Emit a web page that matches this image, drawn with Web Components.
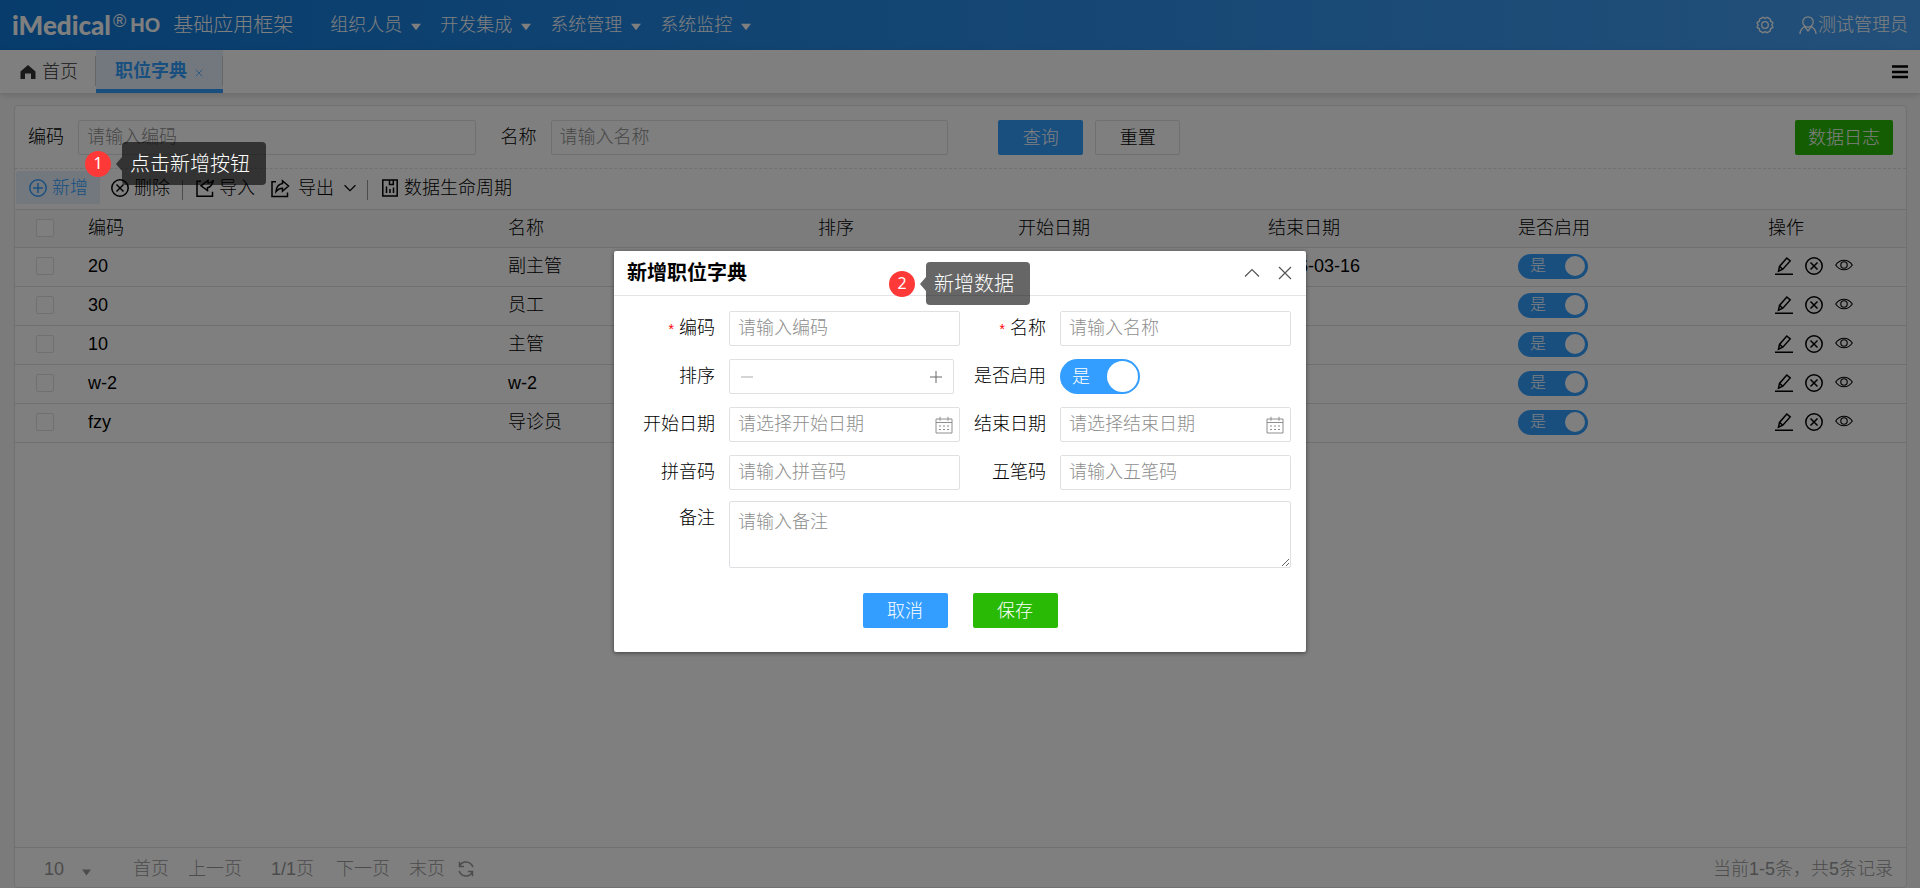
<!DOCTYPE html>
<html lang="zh-CN">
<head>
<meta charset="utf-8">
<title>职位字典</title>
<style>
  html, body { margin: 0; height: 100%; }
  body {
    font: 300 18px/24px "Liberation Sans", "Noto Sans CJK SC", sans-serif;
    color: #000;
    --blue: #339eff;
    --green: #28ba05;
    --line: #dfe0e4;
    --muted: #8e8e8e;
  }
</style>
</head>
<body>
<app-shell></app-shell>
<script>
const RESET = `
  *, *::before, *::after { box-sizing: border-box; }
  button, input, textarea, select { font: inherit; color: inherit; margin: 0; }
  button { background: none; border: 0; padding: 0; cursor: pointer; white-space: nowrap; }
  a { color: inherit; text-decoration: none; white-space: nowrap; }
  ::placeholder { color: var(--muted); opacity: 1; }
`;

function define(name, css, html) {
  customElements.define(name, class extends HTMLElement {
    constructor() {
      super();
      const template = document.createElement('template');
      const body = typeof html === 'function' ? html(this) : html;
      template.innerHTML = `<style>${RESET}${css}</style>${body}`;
      this.attachShadow({ mode: 'open' }).append(template.content.cloneNode(true));
    }
  });
}

const ICONS = {
  plus: '<circle cx="9" cy="9" r="8.2"/><path d="M9 4v10M4 9h10"/>',
  remove: '<circle cx="9" cy="9" r="8.2"/><path d="M5.5 5.500l7 7M12.500 5.500l-7 7"/>',
  import: '<path d="M5 2.200H1v15h15.500v-4.500"/><path d="M17.500 1.200C16 3 14.500 4 12 4V1.500L5 6.800l6.500 4.700V8.800c3-.8 5-3.600 6-7.600z"/>',
  export: '<path d="M5 2.700H1v14.800h15.500v-4"/><path d="M5 12.500c.5-5 3-7.500 6.500-8V1.800L17.500 7l-6 5.200V9.200c-2.500 0-4.800 1.200-6.500 3.300z"/>',
  chart: '<path d="M1.800 1h14.400v16H1.800z"/><path d="M5.500 7.500V14M9 10v4M12.500 8.500V14M8.500 1v4.500h3.800V1"/>',
  edit: '<path d="M0 17.200h18M3.500 14.200l1-4.800L11.800 1l3.400 2.900-7.400 8.300z M4.500 9.400l3.300 2.800"/>',
  eye: '<path d="M.7 9C5 2.600 13 2.600 17.300 9 13 15.400 5 15.400.7 9z"/><circle cx="9" cy="9" r="3.200"/>',
  home: '<path d="M9 2L1.500 8.500V16H6v-5.500h6V16h4.500V8.500z" fill="currentColor"/>',
  close: '<path d="M3 3l12 12M15 3L3 15"/>',
  up: '<path d="M2 12.500l7-7 7 7"/>',
  down: '<path d="M2 5.500l7 7 7-7"/>',
  minus: '<path d="M3 9h12"/>',
  add: '<path d="M3 9h12M9 3v12"/>',
  menu: '<path d="M1 3.500h16M1 9h16M1 14h16" stroke-width="2.600"/>',
  user: '<circle cx="9" cy="6" r="5.200"/><path d="M1 18c0-3.500 1.500-5.500 4.600-7.500L9 15l3.400-4.500C15.500 12.500 17 14.500 17 18"/>',
  gear: '<path d="M6.500 1.500h1L9 2.500l1.500-1h1l2.800 1.700.3 2L16.800 6.300v1L15.800 9l1 1.700v1l-2.200 1.100-.3 2-2.800 1.700h-1l-1.500-1-1.500 1h-1l-2.800-1.700-.3-2-2.200-1.100v-1l1-1.700-1-1.700v-1l2.200-1.100.3-2z"/><circle cx="9" cy="9" r="3.300"/>',
  calendar: '<path d="M1 3h16v14H1zM1 6.500h16M5 .8v4M13 .8v4"/><path d="M4 10h10M4 13.500h10" stroke-dasharray="2 2"/>',
  refresh: '<path d="M2.500 6.500A7 7 0 0 1 14.500 4.500l1.500 2.500M2.500 1.800v4.700h4.500M15.500 11.500a7 7 0 0 1-12 2L2 11M15.500 16.200v-4.700H11"/>',
  caret: '<path d="M0 3h18L9 15z" fill="currentColor" stroke="none"/>'
};
define('ui-icon', `
  :host { display: inline-flex; flex: none; width: 18px; height: 18px; }
  svg { width: 100%; height: 100%; overflow: visible; fill: none; stroke: currentColor; stroke-width: var(--stroke, 1.5); }
`, el => `<svg viewBox="0 0 18 18" aria-hidden="true">${ICONS[el.getAttribute('name')]}</svg>`);

define('ui-button', `
  :host { display: block; flex: none; }
  button { height: 35px; min-width: 85px; padding: 0 12px; border: 1px solid transparent; border-radius: 2px; color: #fff; }
  .primary { background: var(--blue); }
  .success { background: var(--green); }
  .plain { background: #fff; border-color: var(--line); color: #000; }
`, el => `<button type="button" class="${el.getAttribute('kind')}"><slot></slot></button>`);

define('ui-switch', `
  :host { display: inline-block; vertical-align: middle; }
  label { display: flex; align-items: center; justify-content: space-between; width: 70px; height: 25px;
    padding: 0 3px 0 12px; border-radius: 18px; background: var(--blue); color: #fff; font-size: 16px; }
  input { appearance: none; width: 20px; height: 20px; border-radius: 50%; background: #fff; }
  .large { width: 80px; height: 35px; padding: 0 2px 0 12px; font-size: 18px; }
  .large input { width: 31px; height: 31px; }
`, el => `<label class="${el.getAttribute('size') || ''}">是<input type="checkbox" role="switch" checked aria-label="${el.getAttribute('label')}"></label>`);

define('ui-field', `
  :host { display: flex; align-items: flex-start; min-width: 0; }
  label { flex: none; width: var(--label-width, auto); margin-right: var(--label-gap, 14px); text-align: right; line-height: 34px; white-space: nowrap; }
  i { color: red; font-style: normal; font-size: 14px; margin-right: 5px; }
  .box { flex: 1; min-width: 0; min-height: 35px; display: flex; align-items: center; padding: 0 6px 0 8px;
    border: 1px solid var(--line); border-radius: 2px; background: #fff; color: var(--muted); }
  .bare { border: 0; padding: 0; }
  .step { margin-right: 6px; padding: 0 8px; color: #666; --stroke: 1; }
  button { display: flex; }
  .less { color: #aaa; }
  input { flex: 1; min-width: 0; width: 0; height: 33px; padding: 0; border: 0; outline: 0; background: none; }
  .area { padding: 0; }
  textarea { width: 100%; height: 65px; padding: 8px; border: 0; outline: 0; background: none; display: block; resize: both; }
`, el => {
  const label = el.getAttribute('label');
  const type = el.getAttribute('type') || 'text';
  const hint = `placeholder="${el.getAttribute('hint') || ''}"`;
  const star = el.hasAttribute('required') ? '<i>*</i>' : '';
  const body = {
    text: `<div class="box"><input id="c" type="text" ${hint}></div>`,
    date: `<div class="box"><input id="c" type="text" ${hint}><ui-icon name="calendar" style="--stroke:1"></ui-icon></div>`,
    step: `<div class="box step"><button type="button" class="less" aria-label="减少"><ui-icon name="minus"></ui-icon></button><input id="c" type="text"><button type="button" aria-label="增加"><ui-icon name="add"></ui-icon></button></div>`,
    area: `<div class="box area"><textarea id="c" ${hint}></textarea></div>`,
    switch: `<div class="box bare"><ui-switch size="large" label="${label}"></ui-switch></div>`
  }[type];
  return `<label for="c">${star}${label}</label>${body}`;
});

define('app-header', `
  :host { display: flex; align-items: center; height: 50px; padding: 0 12px; color: #fff;
    background: linear-gradient(90deg, #0e79d9, #45a0f5); }
  .logo { display: flex; align-items: center; font-family: Lato, sans-serif; font-weight: 900; font-size: 26px; }
  sup { font: 400 18px/24px "Liberation Sans", sans-serif; align-self: flex-start; margin: -2px 4px 0 2px; }
  .logo b { font: 700 20px/28px "Liberation Sans", sans-serif; }
  h1 { margin: 0 37px 0 13px; font: inherit; font-size: 20px; }
  nav { display: flex; gap: 19px; flex: 1; }
  nav a { display: flex; align-items: center; gap: 9px; }
  nav ui-icon { width: 10px; height: 10px; margin-top: 3px; }
  .right { display: flex; align-items: center; gap: 25px; --stroke: 1.3; }
  .right a { display: flex; align-items: center; gap: 1px; }
  button { display: flex; }
`, `
  <div class="logo">iMedical<sup>®</sup><b>HO</b></div>
  <h1>基础应用框架</h1>
  <nav>${['组织人员', '开发集成', '系统管理', '系统监控'].map(t => `<a href="#">${t}<ui-icon name="caret"></ui-icon></a>`).join('')}</nav>
  <div class="right"><button type="button" aria-label="设置"><ui-icon name="gear"></ui-icon></button>
  <a href="#"><ui-icon name="user"></ui-icon>测试管理员</a></div>
`);

define('app-tabs', `
  :host { display: flex; align-items: center; height: 43px; padding-right: 11px; background: #fff; box-shadow: 0 2px 6px rgba(0,0,0,.15); position: relative; }
  a { display: flex; align-items: center; height: 43px; }
  .home { gap: 5px; padding: 0 18px 0 19px; --stroke: 0; color: #333; }
  .active { gap: 7px; width: 127px; padding: 0 19px; font-weight: 700; color: var(--blue); background: #e4f1fc; border-bottom: 4px solid var(--blue);
    position: relative; }
  .active::before, .active::after { content: ""; position: absolute; top: 6px; height: 30px; width: 1px; background: #ccc; left: -1px; }
  .active::after { left: auto; right: 0; }
  .active span { padding-top: 3px; }
  .active ui-icon { width: 10px; height: 10px; margin-top: 6px; --stroke: 1.3; }
  button { display: flex; margin-left: auto; }
`, `
  <a class="home" href="#"><ui-icon name="home"></ui-icon>首页</a>
  <a class="active" href="#"><span>职位字典</span><ui-icon name="close"></ui-icon></a>
  <button type="button" aria-label="菜单"><ui-icon name="menu"></ui-icon></button>
`);

define('search-panel', `
  :host { display: flex; padding: 13px; border-bottom: 1px dashed var(--line); }
  ui-field { flex: 0 0 24%; margin-right: 25px; }
  .go { margin: 0 12px 0 25px; }
  .log { margin-left: auto; }
`, `
  <ui-field label="编码" hint="请输入编码"></ui-field>
  <ui-field label="名称" hint="请输入名称"></ui-field>
  <ui-button class="go" kind="primary">查询</ui-button>
  <ui-button kind="plain">重置</ui-button>
  <ui-button class="log" kind="success">数据日志</ui-button>
`);

define('tool-bar', `
  :host { display: flex; align-items: center; height: 40px; padding: 0 1px 3px; }
  button { display: flex; align-items: center; gap: 5px; height: 33px; }
  .new { padding: 0 12px 0 13px; margin-right: 11px; background: #e4f1fc; color: var(--blue); border-radius: 2px; }
  i { width: 1px; height: 20px; margin: 4px 13px 0 12px; background: #999; }
  .out { margin-left: 16px; gap: 9px; }
  .out ui-icon + ui-icon { width: 14px; height: 14px; }
  .out + i { margin-left: 10px; }
`, `
  <button type="button" class="new"><ui-icon name="plus"></ui-icon>新增</button>
  <button type="button"><ui-icon name="remove"></ui-icon>删除</button><i></i>
  <button type="button"><ui-icon name="import"></ui-icon>导入</button>
  <button type="button" class="out"><ui-icon name="export"></ui-icon>导出<ui-icon name="down"></ui-icon></button><i></i>
  <button type="button"><ui-icon name="chart"></ui-icon>数据生命周期</button>
`);

const ROWS = [['20', '副主管', '2026-03-16'], ['30', '员工', ''], ['10', '主管', ''], ['w-2', 'w-2', ''], ['fzy', '导诊员', '']];
const check = label => `<input type="checkbox" aria-label="${label}">`;
define('data-table', `
  :host { display: block; flex: 1; border-top: 1px solid var(--line); }
  table { width: 100%; table-layout: fixed; border-collapse: separate; border-spacing: 0; }
  th, td { height: 39px; padding: 0 10px 2px; font-weight: inherit; text-align: left; border-bottom: 1px solid var(--line); white-space: nowrap; }
  th { height: 38px; background: #f8f8f9; }
  th:first-child, td:first-child { padding-left: 21px; }
  input { display: block; appearance: none; width: 18px; height: 18px; margin: 0; border: 1px solid var(--line); border-radius: 2px; background: #fff; }
  .tools { display: flex; align-items: center; gap: 12px; padding-left: 7px; }
  button { display: flex; }
  .view { --stroke: 1.1; margin-bottom: 3px; }
  .c0 { width: 63px; } .c2 { width: 310px; } .c3 { width: 200px; } .c4, .c5, .c6 { width: 250px; } .c7 { width: 148px; }
`, `
  <table>
    <colgroup>${[0, 1, 2, 3, 4, 5, 6, 7].map(i => `<col class="c${i}">`).join('')}</colgroup>
    <thead><tr><th>${check('全选')}</th>${['编码', '名称', '排序', '开始日期', '结束日期', '是否启用', '操作'].map(t => `<th>${t}</th>`).join('')}</tr></thead>
    <tbody>${ROWS.map(([code, name, end]) => `<tr>
      <td>${check('选择 ' + code)}</td><td>${code}</td><td>${name}</td><td></td><td></td><td>${end}</td>
      <td><ui-switch label="是否启用"></ui-switch></td>
      <td><div class="tools">
        <button type="button" aria-label="编辑"><ui-icon name="edit"></ui-icon></button>
        <button type="button" aria-label="删除"><ui-icon name="remove"></ui-icon></button>
        <button type="button" class="view" aria-label="查看"><ui-icon name="eye"></ui-icon></button>
      </div></td></tr>`).join('')}</tbody>
  </table>
`);

define('pager-bar', `
  :host { display: flex; align-items: center; height: 40px; padding: 2px 13px 0 29px; border-top: 1px solid var(--line); color: #999; }
  .size { display: flex; align-items: center; margin-right: 42px; }
  select { appearance: none; width: 38px; padding: 0; border: 0; background: none; }
  .size ui-icon { width: 9px; height: 9px; margin-top: 8px; }
  button { margin-right: 19px; }
  .pages { margin: 0 22px 0 10px; }
  .last { margin-right: 12px; }
  .sync { display: flex; }
  .total { margin-left: auto; }
`, `
  <label class="size"><select aria-label="每页条数"><option>10</option></select><ui-icon name="caret"></ui-icon></label>
  <button type="button">首页</button><button type="button">上一页</button>
  <span class="pages">1/1页</span>
  <button type="button">下一页</button><button type="button" class="last">末页</button>
  <button type="button" class="sync" aria-label="刷新"><ui-icon name="refresh"></ui-icon></button>
  <span class="total">当前1-5条，共5条记录</span>
`);

define('step-callout', `
  :host { display: flex; align-items: center; gap: 11px; position: absolute; z-index: 3; color: #fff; white-space: nowrap; }
  b { width: 26px; height: 26px; border-radius: 50%; background: #ff3838; font: 400 16px/24px "Noto Sans", sans-serif; text-align: center; }
  span { position: relative; height: 43px; padding: 0 16px 0 8px; font-size: 20px; line-height: 44px; border-radius: 4px; background: rgba(0,0,0,.6); }
  span::before { content: ""; position: absolute; left: -6px; top: 15px; border: solid transparent; border-width: 7px 6px 7px 0; border-right-color: rgba(0,0,0,.6); }
`, el => `<b>${el.getAttribute('step')}</b><span><slot></slot></span>`);

define('edit-dialog', `
  :host { display: block; position: relative; width: 692px; height: max-content; background: #fff; border-radius: 2px; box-shadow: 0 1px 4px rgba(0,0,0,.5); }
  header { display: flex; align-items: center; gap: 15px; height: 45px; padding: 0 12px 0 13px; border-bottom: 1px solid #e4e4e8; color: #555; --stroke: 1.2; }
  h2 { flex: 1; margin: 0; font-size: 20px; font-weight: 700; color: #000; }
  header button { display: flex; }
  form { padding: 15px 15px 24px 21px; --label-width: 80px; }
  .grid { display: grid; grid-template-columns: 325px 1fr; gap: 13px 6px; }
  form > ui-field { margin-top: 11px; }
  footer { display: flex; justify-content: center; gap: 25px; margin-top: 25px; padding-right: 6px; }
  step-callout { left: 275px; top: 11px; }
`, `
  <header><h2>新增职位字典</h2>
    <button type="button" aria-label="收起"><ui-icon name="up"></ui-icon></button>
    <button type="button" aria-label="关闭"><ui-icon name="close"></ui-icon></button></header>
  <form>
    <div class="grid">
      <ui-field required label="编码" hint="请输入编码"></ui-field>
      <ui-field required label="名称" hint="请输入名称"></ui-field>
      <ui-field type="step" label="排序"></ui-field>
      <ui-field type="switch" label="是否启用"></ui-field>
      <ui-field type="date" label="开始日期" hint="请选择开始日期"></ui-field>
      <ui-field type="date" label="结束日期" hint="请选择结束日期"></ui-field>
      <ui-field label="拼音码" hint="请输入拼音码"></ui-field>
      <ui-field label="五笔码" hint="请输入五笔码"></ui-field>
    </div>
    <ui-field type="area" label="备注" hint="请输入备注"></ui-field>
    <footer><ui-button kind="primary">取消</ui-button><ui-button kind="success">保存</ui-button></footer>
  </form>
  <step-callout step="2">新增数据</step-callout>
`);

define('app-shell', `
  :host { display: flex; flex-direction: column; min-height: 100vh; position: relative; background: #f7f7f7; }
  main { flex: 1; display: flex; flex-direction: column; margin: 12px 13px 0 14px; border: 1px solid var(--line); border-radius: 4px; background: #fff; }
  search-panel { padding-top: 14px; }
  .mask { position: absolute; inset: 0; z-index: 2; display: flex; justify-content: center; padding: 251px 0 24px; background: rgba(0,0,0,.5); }
  .first { left: 85px; top: 142px; }
`, `
  <app-header></app-header>
  <app-tabs></app-tabs>
  <main>
    <search-panel></search-panel>
    <tool-bar></tool-bar>
    <data-table></data-table>
    <pager-bar></pager-bar>
  </main>
  <div class="mask"><edit-dialog role="dialog" aria-label="新增职位字典"></edit-dialog></div>
  <step-callout class="first" step="1">点击新增按钮</step-callout>
`);
</script>
</body>
</html>
